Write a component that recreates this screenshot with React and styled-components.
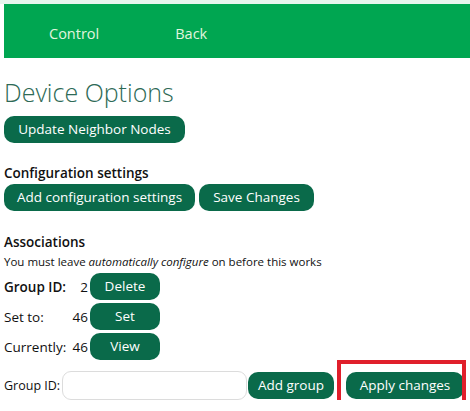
import React from "react";
import styled, { createGlobalStyle } from "styled-components";

const Global = createGlobalStyle`
  body {
    margin: 0;
    background: #fff;
    font-family: "Open Sans", "Noto Sans", sans-serif;
    color: #111;
  }
`;

const Page = styled.div`
  border-top: 4px solid #e6f6ee;
  padding: 0 0 0 4px;
`;

const Header = styled.nav`
  height: 54px;
  box-sizing: border-box;
  padding: 4px 0 0 45px;
  background: #00a651;
  display: flex;
  align-items: center;
  gap: 76px;
  a {
    color: #e2f5df;
    font-size: 14.5px;
    text-decoration: none;
  }
`;

const Title = styled.h1`
  margin: 18px 0 8px;
  font-size: 25px;
  font-weight: 300;
  line-height: 32px;
  color: #2e6a56;
`;

const Button = styled.button`
  height: 27px;
  padding: 0;
  width: ${(p) => (p.$w ? `${p.$w}px` : "auto")};
  border: none;
  border-radius: 10px;
  background: #0a6a4a;
  color: #fff;
  font-family: inherit;
  font-size: 13.5px;
  line-height: 27px;
  white-space: nowrap;
  cursor: pointer;
  flex-shrink: 0;
`;

const Row = styled.div`
  display: flex;
  align-items: center;
  gap: 4px;
`;

const Section = styled.h3`
  margin: ${(p) => p.$top}px 0 2px;
  font-size: 13.5px;
  font-weight: 600;
  line-height: 18px;
`;

const Note = styled.p`
  margin: 3px 0 3px;
  font-size: 11.5px;
  line-height: 16px;
  white-space: nowrap;
  em {
    font-style: italic;
  }
`;

const Assoc = styled.div`
  display: grid;
  grid-template-columns: 62px 24px 70px;
  row-gap: 3px;
  align-items: center;
`;

const Label = styled.span`
  font-size: 13.5px;
  font-weight: ${(p) => (p.$bold ? 600 : 400)};
  white-space: nowrap;
`;

const Value = styled.span`
  font-size: 13.5px;
  text-align: right;
  padding-right: 2px;
`;

const AddRow = styled.div`
  display: flex;
  align-items: center;
  margin-top: 11px;
`;

const SmallLabel = styled.label`
  font-size: 12.5px;
  width: 58px;
  flex-shrink: 0;
  white-space: nowrap;
`;

const Input = styled.input`
  width: 185px;
  height: 29px;
  box-sizing: border-box;
  border: 1px solid #dcdcdc;
  border-radius: 9px;
  margin-right: 1px;
  flex-shrink: 0;
`;

const Highlight = styled.span`
  position: relative;
  margin-left: 12px;
  display: inline-flex;
  &::after {
    content: "";
    position: absolute;
    left: -9px;
    right: -2px;
    top: -12px;
    bottom: -9px;
    border: 4px solid #e01f2b;
    pointer-events: none;
  }
`;

export default function App() {
  return (
    <>
      <Global />
      <Page>
        <Header>
          <a href="#">Control</a>
          <a href="#">Back</a>
        </Header>
        <Title>Device Options</Title>
        <Button $w={181}>Update Neighbor Nodes</Button>

        <Section $top={21}>Configuration settings</Section>
        <Row>
          <Button $w={191}>Add configuration settings</Button>
          <Button $w={115}>Save Changes</Button>
        </Row>

        <Section $top={22}>Associations</Section>
        <Note>
          You must leave <em>automatically configure</em> on before this works
        </Note>
        <Assoc>
          <Label $bold>Group ID:</Label>
          <Value>2</Value>
          <Button $w={70}>Delete</Button>
          <Label>Set to:</Label>
          <Value>46</Value>
          <Button $w={70}>Set</Button>
          <Label>Currently:</Label>
          <Value>46</Value>
          <Button $w={70}>View</Button>
        </Assoc>

        <AddRow>
          <SmallLabel>Group ID:</SmallLabel>
          <Input type="text" />
          <Button $w={86}>Add group</Button>
          <Highlight>
            <Button $w={118}>Apply changes</Button>
          </Highlight>
        </AddRow>
      </Page>
    </>
  );
}
